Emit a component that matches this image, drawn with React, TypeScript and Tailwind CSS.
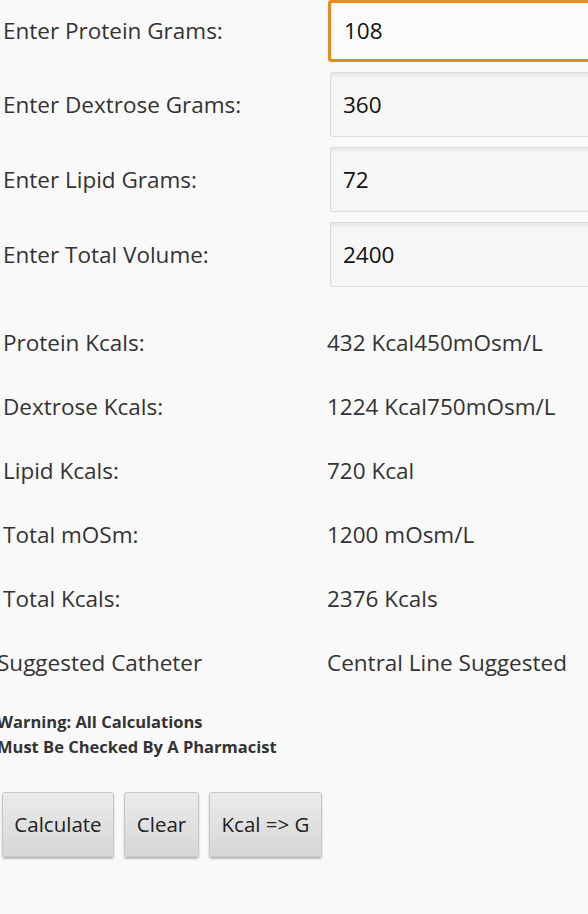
import React from 'react';

const inputs = [
  { label: 'Enter Protein Grams:', value: '108', focused: true },
  { label: 'Enter Dextrose Grams:', value: '360' },
  { label: 'Enter Lipid Grams:', value: '72' },
  { label: 'Enter Total Volume:', value: '2400' },
];

const results = [
  { label: 'Protein Kcals:', value: '432 Kcal450mOsm/L' },
  { label: 'Dextrose Kcals:', value: '1224 Kcal750mOsm/L' },
  { label: 'Lipid Kcals:', value: '720 Kcal' },
  { label: 'Total mOSm:', value: '1200 mOsm/L' },
  { label: 'Total Kcals:', value: '2376 Kcals' },
];

const buttons = [
  { label: 'Calculate', width: 'w-[112px]' },
  { label: 'Clear', width: 'w-[75px]' },
  { label: 'Kcal => G', width: 'w-[113px]' },
];

const App: React.FC = () => {
  return (
    <div
      className="w-[588px] h-[914px] overflow-hidden bg-[#f9f9f9] text-[#333]"
      style={{ fontFamily: '"Open Sans", "DejaVu Sans", sans-serif' }}
    >
      {/* Gram inputs */}
      <div className="flex flex-col gap-[10px]">
        {inputs.map((row) => (
          <div
            key={row.label}
            className={row.focused ? 'flex items-center h-[62px]' : 'flex items-center h-[65px]'}
          >
            <div className="w-[328px] pl-[3px] text-[22.5px]">{row.label}</div>
            <div
              className={
                row.focused
                  ? 'flex-1 -mr-[20px] h-[62px] flex items-center pl-[13px] text-[22.5px] text-[#111] bg-[#fbfbfb] border-[3px] border-[#ec8a1f] rounded-[3px]'
                  : 'flex-1 -mr-[20px] ml-[2px] h-[65px] flex items-center pl-[12px] text-[22.5px] text-[#111] bg-[#f6f6f6] border border-[#dcdcdc] rounded-[2px] shadow-[inset_0_3px_3px_rgba(0,0,0,0.06)]'
              }
            >
              {row.value}
            </div>
          </div>
        ))}
      </div>

      {/* Calculated values */}
      <div className="mt-[24px] flex flex-col">
        {results.map((row) => (
          <div key={row.label} className="flex items-center h-[64px] text-[22.5px]">
            <div className="w-[327px] pl-[3px]">{row.label}</div>
            <div>{row.value}</div>
          </div>
        ))}
        <div className="flex items-center h-[64px] text-[22.5px]">
          <div className="w-[327px] -ml-[3px]">Suggested Catheter</div>
          <div className="ml-[3px]">Central Line Suggested</div>
        </div>
      </div>

      <div className="mt-[14px] -ml-[3px] text-[16.5px] font-bold leading-[25px] text-[#333]">
        <div>Warning: All Calculations</div>
        <div>Must Be Checked By A Pharmacist</div>
      </div>

      {/* Actions */}
      <div className="mt-[33px] flex gap-[10px] pl-[2px]">
        {buttons.map((b) => (
          <button
            key={b.label}
            className={`${b.width} h-[65px] text-[20.5px] text-[#222] rounded-[3px] border border-[#c8c8c8] bg-gradient-to-b from-[#ebebeb] to-[#d6d6d6] shadow-[0_2px_2px_rgba(0,0,0,0.25)]`}
          >
            {b.label}
          </button>
        ))}
      </div>
    </div>
  );
};

export default App;
